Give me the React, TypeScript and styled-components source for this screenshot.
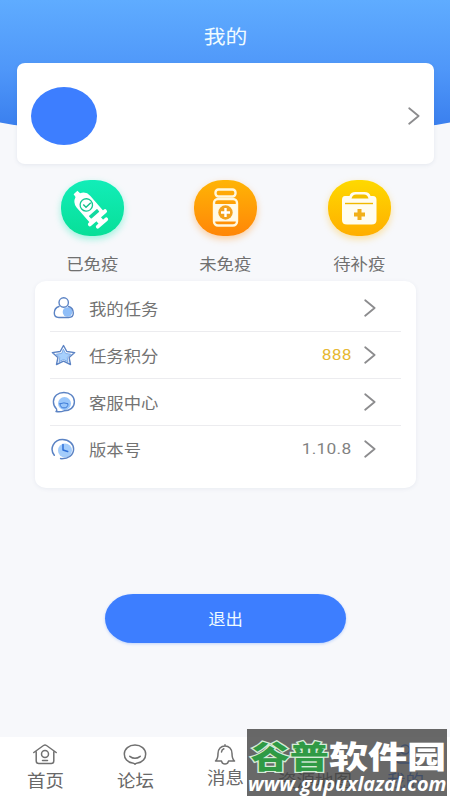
import React from "react";
import styled, { createGlobalStyle } from "styled-components";

const Global = createGlobalStyle`
  *{box-sizing:border-box}
  html,body{margin:0;padding:0}
  body{background:#f7f8fb;font-family:Roboto,"Noto Sans CJK SC",sans-serif;overflow:hidden}
`;
const Page = styled.div`
  position: relative; width: 450px; height: 800px; overflow: hidden;
  background: #f7f8fb; display: flex; flex-direction: column;
`;
const Backdrop = styled.div`
  position: absolute; left: -60px; top: 0; width: 570px; height: 138px;
  background: linear-gradient(#5facff, #4f97f9 50%, #3a7fee 92%);
  border-radius: 0 0 50% 50% / 0 0 40px 40px;
`;
const Wide = styled.span<{ $origin?: string }>`
  display: inline-block; white-space: nowrap;
  transform: scaleX(1.12); transform-origin: ${p => p.$origin ?? "center"};
`;
const Title = styled.h1`
  position: relative; margin: 0; height: 63px; padding: 7px 0 0 1px;
  display: flex; align-items: center; justify-content: center;
  font-size: 19.5px; font-weight: 400; color: #f0fbff;
`;
const Profile = styled.section`
  position: relative; margin: 0 16px 0 17px; height: 101px; flex: none;
  background: #fff; border-radius: 8px / 7px; box-shadow: 0 1px 4px rgba(70,90,130,.1);
  display: flex; align-items: center; justify-content: space-between;
  padding: 4px 14px 0 14px;
`;
const Avatar = styled.div`
  width: 66px; height: 58px; border-radius: 50%; background: #3d7eff;
`;
const Shortcuts = styled.nav`
  display: grid; grid-template-columns: repeat(3, 133.5px); justify-content: center;
  height: 117px; padding: 16px 0 0 1px; flex: none;
`;
const Shortcut = styled.div`
  display: flex; flex-direction: column; align-items: center;
  font-size: 15.5px; line-height: 20px; color: #707070; gap: 19px;
`;
const Blob = styled.div<{ $bg: string; $glow: string }>`
  width: 63px; height: 56px; border-radius: 46% / 48%;
  background: ${p => p.$bg}; box-shadow: 0 3px 7px ${p => p.$glow};
  svg { display: block; width: 63px; height: 56px; }
`;
const List = styled.section`
  margin: 0 34.5px 0 35px; height: 207px; flex: none; padding: 4px 15px 0;
  background: #fff; border-radius: 11px / 10px; box-shadow: 0 1px 4px rgba(70,90,130,.08);
`;
const Row = styled.div`
  height: 46.9px; display: flex; align-items: center; padding-right: 24.5px;
  border-bottom: 1px solid #ececef; font-size: 15.5px; color: #737373;
  &:last-child { border-bottom: 0; }
  > svg:first-child { margin-right: 12px; flex: none; }
`;
const Value = styled.span<{ $gold?: boolean }>`
  margin-left: auto; margin-right: 12px; font-size: 15.500px; letter-spacing: .25px;
  color: ${p => (p.$gold ? "#e6b833" : "#828282")};
`;
const Logout = styled.button`
  width: 241px; height: 49px; margin: 106px 0 0 105px; padding: 0 0 2px; flex: none; border: 0;
  border-radius: 28px / 24.5px; background: #3d7eff; color: #eefaff;
  font: 400 15.5px Roboto,"Noto Sans CJK SC",sans-serif;
  box-shadow: 0 1px 3px rgba(61,126,255,.3);
`;
const TabBar = styled.footer`
  margin-top: auto; height: 63px; flex: none; background: #fff;
  display: grid; grid-template-columns: repeat(5, 90px);
`;
const Tab = styled.div<{ $active?: boolean; $lift?: boolean }>`
  display: flex; flex-direction: column; align-items: center;
  padding-top: 6px; gap: ${p => (p.$lift ? 1 : 4)}px;
  font-size: 16.5px; line-height: 24px; color: ${p => (p.$active ? "#3d7eff" : "#686868")};
`;
const Watermark = styled.aside`
  position: absolute; left: 246.5px; top: 729px; width: 200px; height: 67px;
  background: rgba(66,66,66,.8); overflow: hidden;
  display: flex; flex-direction: column; align-items: flex-start;
`;
const Brand = styled.div`
  height: 44px; line-height: 51px; padding-left: 3px; white-space: nowrap;
  font-family: "Noto Sans CJK SC", sans-serif; font-weight: 800; font-size: 31px; color: #fff;
  transform: scaleX(1.26); transform-origin: left;
`;
const Green = styled.span`
  color: #2f9a45; -webkit-text-stroke: 2.4px #d5ecd8; paint-order: stroke fill;
`;
const Site = styled.div`
  height: 23px; white-space: nowrap; color: #fff; padding-left: 1px;
  font: italic 700 19px/22px "Open Sans","Noto Sans",sans-serif;
  transform: scaleX(1.042); transform-origin: left;
`;

const Chevron = () => (
  <svg width="12" height="18" viewBox="0 0 12 18" fill="none" stroke="#8c8c8e" strokeWidth="1.8" strokeLinecap="round" strokeLinejoin="round">
    <path d="M1.2 1.2 10.6 9 1.2 16.8" />
  </svg>
);

const Syringe = () => (
  <svg viewBox="0 0 63 56">
    <g transform="translate(14.500 12.500) rotate(-41)" fill="#fff">
      <path d="M-2.500 0h5l.5 3.500q6 2.500 6 8.500v21H-9V12q0-6 6-8.500z" />
      <rect x="-12" y="31.500" width="24" height="4" rx="2" />
      <rect x="-3" y="34" width="6" height="7" />
      <rect x="-7.500" y="38.500" width="15" height="3.800" rx="1.900" />
      <circle cy="16.500" r="6.200" fill="none" stroke="#17c993" strokeWidth="1.300" />
      <rect x="-5.500" y="26.500" width="11" height="3.600" rx=".6" fill="#12d9a0" />
    </g>
    <path d="m22.300 24.600 2.700 2.700 4.800-4.600" fill="none" stroke="#14c08a" strokeWidth="1.400" />
  </svg>
);
const Bottle = () => (
  <svg viewBox="0 0 63 56">
    <rect x="21.500" y="9.500" width="20" height="7" rx="3" fill="none" stroke="#fff8df" strokeWidth="2.400" />
    <rect x="20" y="19" width="23" height="26.500" rx="4" fill="none" stroke="#fff8df" strokeWidth="2.400" />
    <rect x="20" y="24" width="23" height="17.500" fill="#fff9e7" />
    <circle cx="31.500" cy="32.500" r="7.200" fill="#f3a11c" />
    <path d="M31.500 28v9M27 32.500h9" stroke="#fff" strokeWidth="2.400" />
  </svg>
);
const Kit = () => (
  <svg viewBox="0 0 63 56">
    <path d="M17 16h4.500q1-4 6-4h9q5 0 6 4H45q3.500 0 3.500 4V40q0 4.500-5 4.500H19q-5 0-5-4.500V20q0-4 3-4z" fill="#fffdf0" />
    <path d="M23.500 18.500q1-4 4.500-4h8q3.500 0 4.500 4z" fill="#f4c000" />
    <path d="M17 23.500h28" stroke="#f0b900" strokeWidth="1.400" />
    <path d="M31.500 29v11M26 34.500h11" stroke="#f1b018" strokeWidth="4" />
  </svg>
);

const line = { fill: "none", stroke: "#5b83c4", strokeWidth: 1.4, strokeLinejoin: "round" as const, strokeLinecap: "round" as const };
const Person = () => (
  <svg width="27" height="24" viewBox="0 0 27 24" {...line}>
    <circle cx="17.500" cy="16" r="4.800" fill="#8fbef8" stroke="none" />
    <circle cx="13.700" cy="6.500" r="4.700" />
    <path d="M9 10.500Q4.300 12 4.300 17q0 4.500 4.500 4.500h9.800q4.700 0 4.700-4.500 0-5-4.800-6.500" />
  </svg>
);
const Star = () => (
  <svg width="27" height="24" viewBox="0 0 27 24" {...line}>
    <path d="m13.500 2.500 3.300 6 7.900 1.100-5.600 5 1.400 6.900-7-3.400-7 3.400 1.400-6.900-5.600-5 7.900-1.100z" />
    <path d="m13.500 6.500 2.200 4 5 .7-3.500 3.200.8 4.300-4.500-2.200-4.500 2.200.8-4.300-3.500-3.200 5-.7z" fill="#a7d0fc" stroke="#78a7e5" strokeWidth=".9" />
  </svg>
);
const Chat = () => (
  <svg width="27" height="24" viewBox="0 0 27 24" {...line}>
    <circle cx="14.500" cy="13.500" r="6.500" fill="#99c6fb" stroke="none" />
    <path d="M6.500 19Q3.400 16 3.400 11.700C3.400 6 8 2.500 13.900 2.500S24.400 6 24.400 11.700 20 20.800 14 20.800q-3.300 1.300-8 .7 1.400-1 .5-2.500" />
    <path d="M10 13.700q4-1.700 8 0 0 4.200-4 4.200t-4-4.200z" stroke="#3e7cd8" strokeWidth="1" />
  </svg>
);
const Clock = () => (
  <svg width="27" height="24" viewBox="0 0 27 24" {...line}>
    <circle cx="15" cy="13.500" r="7" fill="#a4cdfb" stroke="none" />
    <path d="M4.300 18.300C-1 11.300 4 2.600 12.500 2.600c6.500 0 11.100 4.200 11.100 9.500 0 6-5 9.900-13 9.500" strokeWidth="1.500" />
    <path d="M13 7.500v5.500l4.700 1.500" stroke="#2f70d8" strokeWidth="1.500" />
  </svg>
);
const tabLine = { width: 26, height: 23, viewBox: "0 0 26 23", fill: "none", stroke: "#707070", strokeWidth: 1.5, strokeLinecap: "round" as const, strokeLinejoin: "round" as const };
const Home = () => (
  <svg {...tabLine}><path d="M1.800 9.500 11.500 2.500q1.500-1 3 0l9.700 7M4.200 8.500V18q0 2.500 2.500 2.500h12.600q2.500 0 2.500-2.500V8.500M10.500 17.500h5" /><circle cx="13" cy="11" r="3.500" /></svg>
);
const Smile = () => (
  <svg {...tabLine}><path d="M13 21.200q-1-1-2.500-1.200C5.500 19.500 2.300 15.700 2.300 11c0-5 4.700-8.900 10.700-8.900S23.700 6 23.700 11c0 4.700-3.200 8.500-8.200 9q-1.500.2-2.500 1.200zM7.800 13.300q5.200 4 10.400 0" /></svg>
);
const Bell = () => (
  <svg {...tabLine}><path d="M13 1.700v1M3.500 18c2.500-2 2.500-4 2.500-7.500C6 6 9 3 13 3s7 3 7 7.500c0 3.500 0 5.500 2.500 7.500h-6Q16 21 13 21T9.500 18zM9.500 9q.2-2.500 2.300-3.200" /></svg>
);
const MapIcon = () => (
  <svg {...tabLine}><path d="M13 20C7 14 6 11 6 8a7 6 0 0 1 14 0c0 3-1 6-7 12z" /><circle cx="13" cy="8" r="2.500" /></svg>
);
const Me = () => (
  <svg {...tabLine} stroke="#3d7eff"><circle cx="13" cy="6.500" r="4.500" /><path d="M8 11c-7 3-4 9 0 9h10c4 0 7-6 0-9" /></svg>
);

const shortcuts = [
  { label: "已免疫", icon: <Syringe />, bg: "linear-gradient(#12edb8,#08df98)", glow: "rgba(20,235,180,.4)" },
  { label: "未免疫", icon: <Bottle />, bg: "linear-gradient(#ffb405,#ff8608)", glow: "rgba(255,145,30,.4)" },
  { label: "待补疫", icon: <Kit />, bg: "linear-gradient(#fed900,#ffae00)", glow: "rgba(255,190,30,.4)" },
];
const rows = [
  { label: "我的任务", icon: <Person /> },
  { label: "任务积分", icon: <Star />, value: "888", gold: true },
  { label: "客服中心", icon: <Chat /> },
  { label: "版本号", icon: <Clock />, value: "1.10.8" },
];
const tabs = [
  { label: "首页", icon: <Home /> },
  { label: "论坛", icon: <Smile /> },
  { label: "消息", icon: <Bell />, lift: true },
  { label: "资源地图", icon: <MapIcon /> },
  { label: "我的", icon: <Me />, active: true },
];

export default function App() {
  return (
    <>
      <Global />
      <Page>
        <Backdrop />
        <Title><Wide>我的</Wide></Title>
        <Profile><Avatar /><Chevron /></Profile>
        <Shortcuts>
          {shortcuts.map(s => (
            <Shortcut key={s.label}>
              <Blob $bg={s.bg} $glow={s.glow}>{s.icon}</Blob>
              <Wide>{s.label}</Wide>
            </Shortcut>
          ))}
        </Shortcuts>
        <List>
          {rows.map(r => (
            <Row key={r.label}>
              {r.icon}
              <Wide $origin="left">{r.label}</Wide>
              <Value $gold={r.gold}>{r.value && <Wide $origin="right">{r.value}</Wide>}</Value>
              <Chevron />
            </Row>
          ))}
        </List>
        <Logout><Wide>退出</Wide></Logout>
        <TabBar>
          {tabs.map(t => (
            <Tab key={t.label} $active={t.active} $lift={t.lift}>
              {t.icon}
              <Wide>{t.label}</Wide>
            </Tab>
          ))}
        </TabBar>
        <Watermark>
          <Brand><Green>谷普</Green>软件园</Brand>
          <Site>www.gupuxlazal.com</Site>
        </Watermark>
      </Page>
    </>
  );
}
